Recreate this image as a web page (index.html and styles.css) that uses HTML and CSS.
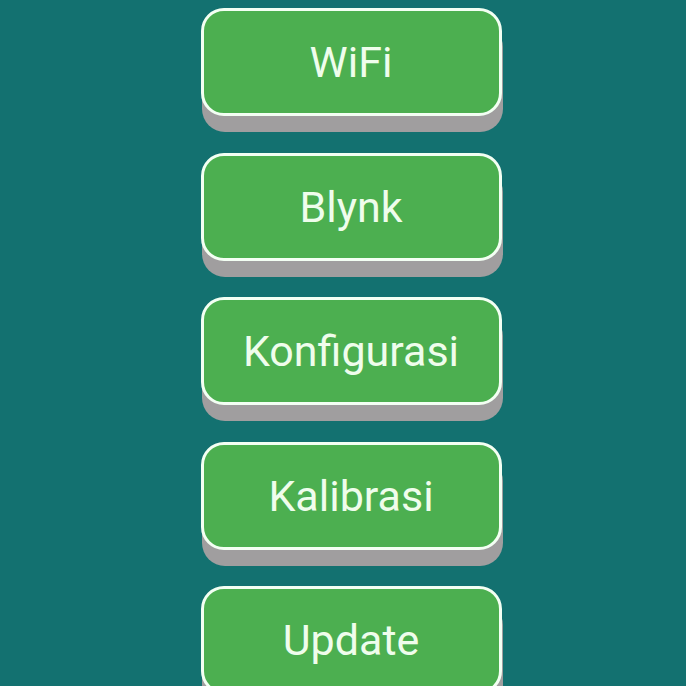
FILE: index.html
```
<!DOCTYPE html>
<html lang="id">
<head>
<meta charset="utf-8">
<title>Menu</title>
<link rel="stylesheet" href="styles.css">
</head>
<body>
<main class="menu">
  <button class="menu-btn">WiFi</button>
  <button class="menu-btn">Blynk</button>
  <button class="menu-btn">Konfigurasi</button>
  <button class="menu-btn">Kalibrasi</button>
  <button class="menu-btn">Update</button>
</main>
</body>
</html>
```
FILE: styles.css
```
html, body {
  margin: 0;
  padding: 0;
  height: 100%;
  background: #137170;
  overflow: hidden;
}

.menu {
  display: flex;
  flex-direction: column;
  align-items: center;
  gap: 36.5px;
  padding-top: 8px;
  padding-left: 16px;
}

.menu-btn {
  box-sizing: border-box;
  width: 301px;
  height: 108px;
  flex: none;
  background: #4caf50;
  border: 3px solid #f3fff3;
  border-radius: 23px;
  box-shadow: 1px 16px 0 #a09e9f;
  color: #effdec;
  font-family: Roboto, "Liberation Sans", sans-serif;
  font-size: 43px;
  font-weight: 400;
  padding: 0;
  cursor: pointer;
}
```
